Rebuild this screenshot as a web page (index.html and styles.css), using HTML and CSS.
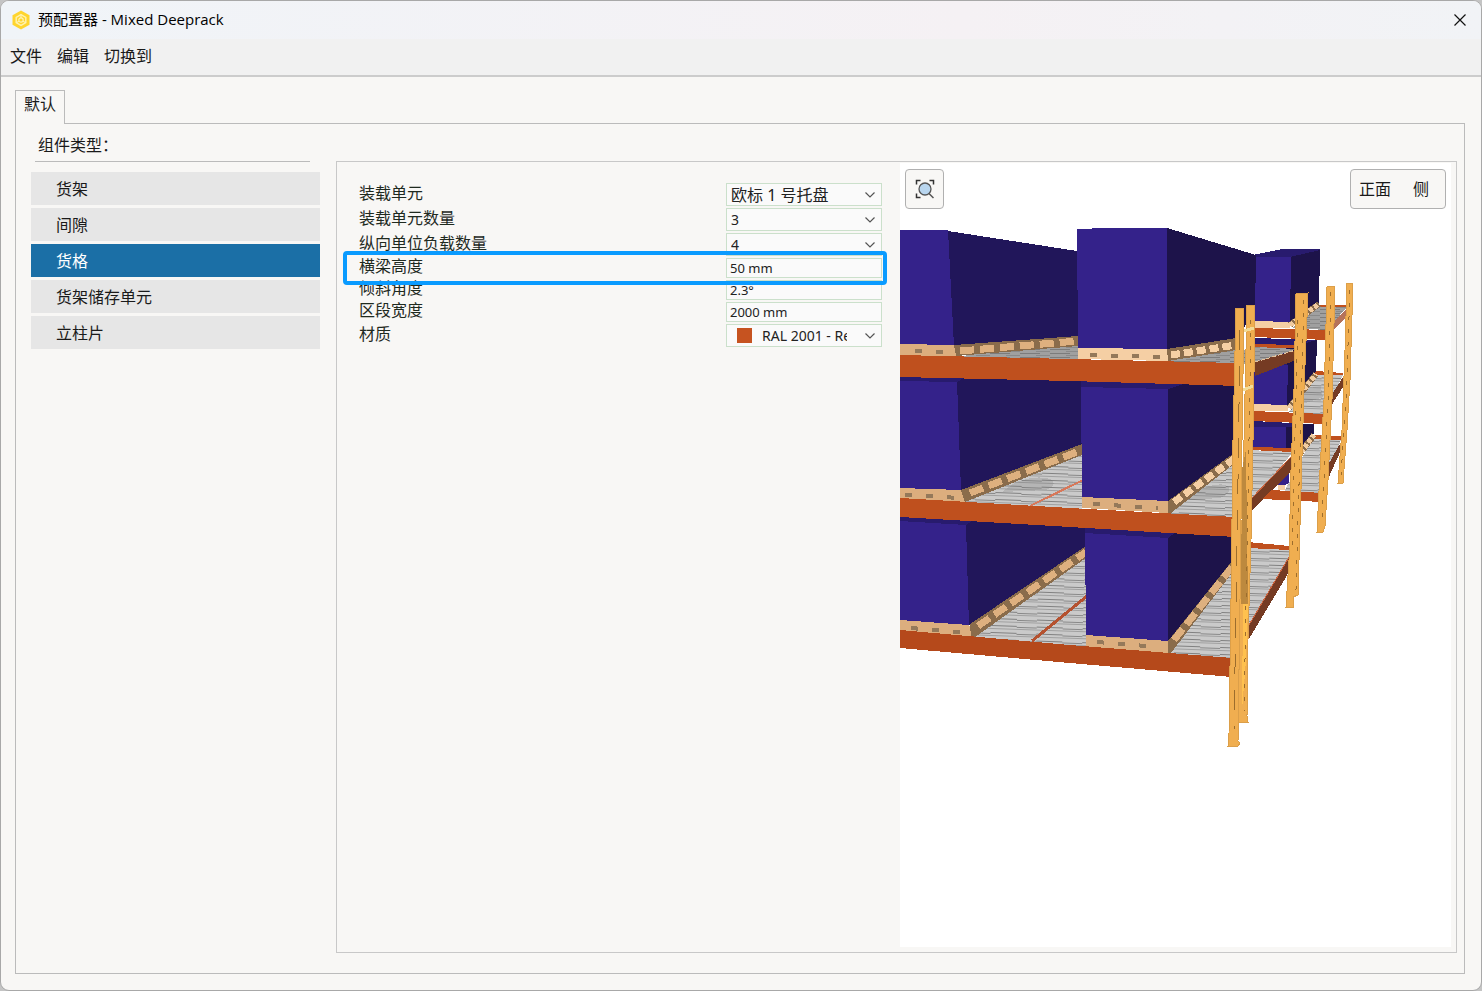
FILE: index.html
```
<!DOCTYPE html>
<html lang="zh-CN">
<head>
    <meta charset="UTF-8">
    <meta name="viewport" content="width=device-width, initial-scale=1.0">
    <title>预配置器 - Mixed Deeprack</title>
    <link rel="stylesheet" href="styles.css">
</head>
<body>
    <div class="window">
        <header class="titlebar">
            <svg class="logo" viewBox="0 0 20 20" aria-hidden="true">
                <path d="M10 0.5L18.5 5.2V14.8L10 19.5L1.5 14.8V5.2Z" fill="#ffd52e"/>
                <path d="M10 4.6L14.8 7.3V12.7L10 15.4L5.2 12.7V7.3Z" fill="none" stroke="#fff3b0" stroke-width="1.4"/>
                <path d="M10 4.6V8M5.2 12.7L8 11.2M14.8 12.7L12 11.2" stroke="#fff3b0" stroke-width="1.2"/>
                <circle cx="10" cy="10" r="2.2" fill="none" stroke="#fff3b0" stroke-width="1.2"/>
            </svg>
            <h1>预配置器 - Mixed Deeprack</h1>
            <button class="close" type="button" aria-label="关闭">
                <svg viewBox="0 0 12 12"><path d="M0.5 0.5L11.5 11.5M11.5 0.5L0.5 11.5" stroke="#111" stroke-width="1.2"/></svg>
            </button>
        </header>

        <nav class="menubar">
            <button type="button">文件</button>
            <button type="button">编辑</button>
            <button type="button">切换到</button>
        </nav>

        <main>
            <div class="tabs">
                <button class="tab" type="button">默认</button>
            </div>

            <div class="tab-panel">
                <aside class="sidebar">
                    <h2>组件类型：</h2>
                    <div class="type-list">
                        <button type="button">货架</button>
                        <button type="button">间隙</button>
                        <button type="button" class="active">货格</button>
                        <button type="button">货架储存单元</button>
                        <button type="button">立柱片</button>
                    </div>
                </aside>

                <section class="detail">
                    <form class="properties">
                        <div class="row">
                            <label for="unit">装载单元</label>
                            <div class="select-box">
                                <select id="unit" class="large"><option>欧标 1 号托盘</option></select>
                                <svg class="chevron" viewBox="0 0 10 6"><path d="M0.5 0.5L5 5L9.5 0.5" fill="none" stroke="#555" stroke-width="1.2"/></svg>
                            </div>
                        </div>
                        <div class="row">
                            <label for="unit-count">装载单元数量</label>
                            <div class="select-box">
                                <select id="unit-count"><option>3</option></select>
                                <svg class="chevron" viewBox="0 0 10 6"><path d="M0.5 0.5L5 5L9.5 0.5" fill="none" stroke="#555" stroke-width="1.2"/></svg>
                            </div>
                        </div>
                        <div class="row">
                            <label for="depth-count">纵向单位负载数量</label>
                            <div class="select-box">
                                <select id="depth-count"><option>4</option></select>
                                <svg class="chevron" viewBox="0 0 10 6"><path d="M0.5 0.5L5 5L9.5 0.5" fill="none" stroke="#555" stroke-width="1.2"/></svg>
                            </div>
                        </div>
                        <div class="row highlight">
                            <label for="beam-height">横梁高度</label>
                            <input id="beam-height" type="text" value="50 mm">
                        </div>
                        <div class="row">
                            <label for="angle">倾斜角度</label>
                            <input id="angle" type="text" value="2.3°">
                        </div>
                        <div class="row">
                            <label for="bay-width">区段宽度</label>
                            <input id="bay-width" type="text" value="2000 mm">
                        </div>
                        <div class="row">
                            <label for="material">材质</label>
                            <div class="select-box">
                                <select id="material" class="with-swatch"><option>RAL 2001 - Red orange</option></select>
                                <span class="swatch"></span>
                                <svg class="chevron" viewBox="0 0 10 6"><path d="M0.5 0.5L5 5L9.5 0.5" fill="none" stroke="#555" stroke-width="1.2"/></svg>
                            </div>
                        </div>
                    </form>

                    <div class="view">
                        <svg class="scene" viewBox="900 163 551 784" preserveAspectRatio="xMinYMin meet" shape-rendering="crispEdges" role="img" aria-label="货架三维视图">
                            <defs>
                                <pattern id="rollers" width="46" height="7" patternUnits="userSpaceOnUse" patternTransform="rotate(2)">
                                    <rect width="46" height="7" fill="#cacaca"/>
                                    <rect y="2" width="26" height="1" fill="#808080"/>
                                    <rect x="26" y="3" width="20" height="1" fill="#888888"/>
                                    <rect y="5" width="46" height="1" fill="#a0a0a0"/>
                                </pattern>
                                <pattern id="rollers-far" width="30" height="4" patternUnits="userSpaceOnUse">
                                    <rect width="30" height="4" fill="#a0a0a0"/>
                                    <rect y="1" width="20" height="1" fill="#7c7c7c"/>
                                    <rect x="16" y="3" width="14" height="1" fill="#8a8a8a"/>
                                </pattern>
                            </defs>

                            <!-- rear bays -->
                            <g class="rear">
                                <path class="top" d="M1253 255L1282 249H1320V258H1253Z"/>
                                <path class="side-dark" d="M1290 257L1320 250L1319 303L1290 323Z"/>
                                <path class="front" d="M1255 257H1291L1290 322H1255Z"/>
                                <path class="beam" d="M1319 305H1347V308H1317Z"/>
                                <path class="floor-far" d="M1292 328L1319 307H1347L1327 330Z"/>
                                <path class="pallet-light" d="M1255 321L1290 322V328H1255Z"/>
                                <path class="pallet-edge" d="M1290 325L1319 304"/>
                                <path class="pallet-blocks" d="M1290 325L1319 304"/>
                                <path class="beam-pale" d="M1334 321L1347 309V317L1334 329Z"/>

                                <path class="top" d="M1255 338L1317 340V344L1288 366H1255Z"/>
                                <path class="side-dark" d="M1287 348L1317 340L1316 372L1287 406Z"/>
                                <path class="front" d="M1254 365H1288L1287 405H1254Z"/>
                                <path class="beam" d="M1255 328L1327 330V340L1255 337Z"/>
                                <path class="beam" d="M1255 344L1296 345V348H1255Z"/>
                                <path class="floor-far" d="M1238 352L1257 347L1296 349L1256 363L1238 364Z"/>
                                <path class="beam-side" d="M1255 362L1296 350V360L1255 376Z"/>
                                <path d="M1255 362L1296 350" stroke="#e5c39c" stroke-dasharray="4 2"/>

                                <path class="beam" d="M1316 371L1343 373V376L1314 375Z"/>
                                <path class="floor" d="M1289 412L1316 375H1343L1331 398L1325 415Z"/>
                                <path class="shade" d="M1303 394Q1308 386 1321 387L1323 397L1303 404Z"/>
                                <path class="pallet-light" d="M1254 404L1288 405V411H1254Z"/>
                                <path class="pallet-edge" d="M1289 408L1316 374"/>
                                <path class="pallet-blocks" d="M1289 408L1316 374"/>
                                <path class="beam-side" d="M1331 396L1343 377V387L1331 406Z"/>

                                <path class="side-dark" d="M1285 423L1314 424V433L1300 452L1285 449Z"/>
                                <path class="front" d="M1253 426H1286V448H1253Z"/>
                                <path class="top" d="M1253 421L1292 423V427H1253Z"/>
                                <path class="beam" d="M1253 411L1325 414V424L1253 421Z"/>
                                <path class="beam" d="M1313 435L1341 436V440H1312Z"/>
                                <path class="floor" d="M1284 492L1312 439L1341 440L1330 470L1322 494Z"/>
                                <path class="pallet-edge" d="M1301 452L1314 435"/>
                                <path class="pallet-blocks" d="M1301 452L1314 435"/>
                                <path class="beam-side" d="M1328 465L1341 442V450L1328 479Z"/>
                                <path class="front" d="M1278 485L1289 472V483L1284 486Z"/>
                                <path class="pallet-light" d="M1278 485H1285V490H1278Z"/>

                                <path class="beam" d="M1253 447L1293 448V452L1250 450Z"/>
                                <path class="floor" d="M1248 450L1293 452L1252 501Z"/>
                                <path class="beam-side" d="M1251 499L1291 457V471L1251 511Z"/>
                                <path class="beam-line" d="M1251 499L1291 457"/>
                                <path class="beam" d="M1271 490L1322 493V502L1262 499Z"/>

                                <path class="beam" d="M1248 542L1289 546V550L1248 548Z"/>
                                <path class="floor" d="M1248 548L1289 550V562L1249 630Z"/>
                                <path class="beam-side" d="M1249 625L1289 557V572L1249 639Z"/>
                                <path class="beam-line" d="M1249 625L1289 557"/>
                            </g>

                            <!-- top level -->
                            <path class="side" d="M948 231L1077 251L1079 338L953 346Z"/>
                            <path class="front" d="M900 230H948L954 346L900 345Z"/>
                            <path class="floor-far" d="M955 357L1078 340V362H955Z"/>
                            <path class="pallet" d="M900 344L954 345L958 357L900 356Z"/>
                            <path class="pallet-gaps" d="M915 351L975 353"/>
                            <path class="band" d="M954 345L1078 336V346L956 356Z"/>
                            <path class="pallet-blocks wide" d="M960 351L1078 341"/>
                            <path class="floor-far" d="M1167 361L1237 346V366H1167Z"/>
                            <path class="side-dark" d="M1167 228L1256 255L1255 312L1236 339L1167 350Z"/>
                            <path class="front" d="M1077 229L1107 228H1167V350L1078 348Z"/>
                            <path class="pallet-light" d="M1078 348L1167 349L1168 361L1078 359Z"/>
                            <path class="pallet-gaps" d="M1090 355L1160 357"/>
                            <path class="band" d="M1167 349L1236 338V350L1168 361Z"/>
                            <path class="pallet-blocks light wide" d="M1171 355L1236 345"/>

                            <!-- middle level -->
                            <path class="side" d="M956 375L1084 378L1082 446L960 492Z"/>
                            <path class="front" d="M900 377L957 381L961 491L900 488Z"/>
                            <path class="top" d="M900 376L964 378L957 382L900 381Z"/>
                            <path class="floor" d="M962 500L1082 452V512L962 505Z"/>
                            <path class="shade" d="M1016 482Q1040 474 1052 480Q1057 486 1046 490L1002 492Z"/>
                            <path class="rail" d="M1030 506L1083 480"/>
                            <path class="pallet" d="M900 488L961 490L966 502L900 499Z"/>
                            <path class="pallet-gaps" d="M905 495L960 498"/>
                            <path class="band" d="M961 490L1082 444V455L965 502Z"/>
                            <path class="pallet-blocks wide" d="M970 493L1082 450"/>
                            <path class="floor" d="M1167 513L1235 460V520L1167 516Z"/>
                            <path class="shade" d="M1200 489Q1222 481 1229 487Q1231 494 1220 498L1186 500Z"/>
                            <path class="side-dark" d="M1167 380H1238L1234 455L1167 502Z"/>
                            <path class="front" d="M1081 386L1168 388V502L1082 498Z"/>
                            <path class="top" d="M1081 387V378L1184 380V384L1168 389Z"/>
                            <path class="pallet" d="M1082 497L1168 501V513L1082 508Z"/>
                            <path class="pallet-gaps" d="M1093 504L1158 508"/>
                            <path class="band" d="M1168 501L1234 453V464L1171 513H1168Z"/>
                            <path class="pallet-blocks light wide" d="M1174 502L1234 459"/>
                            <path class="beam" d="M900 355L1070 359L1237 363L1240 386L1070 381L900 377Z"/>

                            <!-- bottom level -->
                            <path class="side" d="M965 517L1088 524L1086 548L968 626Z"/>
                            <path class="front" d="M900 518L966 524L969 626L900 621Z"/>
                            <path class="top" d="M900 514L972 518V521L966 525L900 521Z"/>
                            <path class="floor" d="M970 635L1086 554L1087 650L970 640Z"/>
                            <path class="rail dark" d="M1032 641L1087 596"/>
                            <path class="pallet" d="M900 620L969 625L974 637L900 631Z"/>
                            <path class="pallet-gaps" d="M911 628L966 633"/>
                            <path class="band" d="M970 624L1086 546V558L975 637H971Z"/>
                            <path class="pallet-blocks wide" d="M978 626L1086 552"/>
                            <path class="floor" d="M1167 656L1233 568V662L1167 657Z"/>
                            <path class="side-dark" d="M1167 528L1233 532L1232 563L1167 642Z"/>
                            <path class="front" d="M1085 532L1168 536V642L1086 636Z"/>
                            <path class="top" d="M1085 533V524L1176 529V532L1168 538Z"/>
                            <path class="pallet" d="M1086 635L1168 641V653L1086 647Z"/>
                            <path class="pallet-gaps" d="M1097 642L1158 647"/>
                            <path class="band" d="M1168 641L1232 561V573L1171 653H1168Z"/>
                            <path class="pallet-blocks wide" d="M1174 640L1232 567"/>
                            <path class="beam" d="M900 498L1070 508L1235 517V537L1070 527L900 517Z"/>
                            <path class="beam low" d="M900 630L1070 645L1232 658V677L1070 663L900 648Z"/>

                            <!-- uprights -->
                            <path class="post" d="M1347 283H1353L1350 380L1347 430L1343 483H1338L1342 430L1345 350Z"/>
                            <path class="slots" d="M1350 290L1346 400L1341 475"/>
                            <path class="post" d="M1327 287L1335 286L1332 400L1328 480L1325 526L1323 532H1317L1320 470L1324 400Z"/>
                            <path class="slots" d="M1331 292L1328 400L1322 520"/>
                            <path class="post" d="M1296 294L1308 293L1304 390L1301 490L1298 595L1293 597V607H1286L1289 560L1291 470L1294 390Z"/>
                            <path class="slots" d="M1304 300L1300 450L1296 590"/>
                            <path class="slots" d="M1298 320L1294 470L1292 550"/>
                            <path class="post" d="M1247 305H1255L1253 440L1251 540L1248 640L1247 716L1248 722H1238L1240 600L1244 440Z"/>
                            <path d="M1242 470L1246 450L1248 604H1241Z" fill="#bd893e"/>
                            <path d="M1243 604H1248L1246 660L1242 710Z" fill="#ffc14f"/>
                            <path class="slots" d="M1251 320L1248 500L1244 712"/>
                            <path class="brace" d="M1244 331L1254 328M1243 390L1253 386"/>
                            <path class="post" d="M1236 308H1244L1242 440L1240 600L1238 741L1240 743L1238 746H1228L1229 733L1231 600L1233 440Z"/>
                            <path class="slots long" d="M1240 330L1238 480L1234 730"/>
                        </svg>

                        <button class="tool fit" type="button" aria-label="缩放至全部">
                            <svg viewBox="0 0 20 20">
                                <path d="M1.5 5.5V1.5H5.5M14.5 1.5H18.5V5.5M1.5 14.5V18.5H5.5" fill="none" stroke="#333" stroke-width="1.5"/>
                                <path d="M13.5 14L18.5 19" stroke="#555" stroke-width="1.5"/>
                                <circle cx="10" cy="10" r="6" fill="#b9d6ef" stroke="#555" stroke-width="1.3"/>
                            </svg>
                        </button>
                        <div class="tool sides">
                            <button type="button">正面</button>
                            <button type="button">侧</button>
                        </div>
                    </div>
                </section>
            </div>
        </main>
    </div>
</body>
</html>
```

FILE: styles.css
```
* {
    box-sizing: border-box;
}

body {
    margin: 0;
    background-color: #c4c4c4;
    font-family: "Noto Sans", "Noto Sans CJK SC", sans-serif;
    font-size: 16px;
    color: #1a1a1a;
}

button,
input,
select {
    font-family: inherit;
    font-size: inherit;
    color: inherit;
    margin: 0;
}

button {
    border: none;
    background: none;
    padding: 0;
    cursor: pointer;
}

.window {
    min-height: 100vh;
    display: flex;
    flex-direction: column;
    background-color: #f8f7f5;
    border: 1px solid #a8a8a8;
    border-radius: 9px;
    overflow: hidden;
}

/* title and menu */
.titlebar {
    display: flex;
    align-items: center;
    height: 38px;
    padding: 0 15px 0 10px;
    background: linear-gradient(90deg, #f0f4f8, #f5f1f4 65%, #f1f3f6);
}

.logo {
    width: 20px;
    height: 20px;
    margin-right: 7px;
}

.titlebar h1 {
    flex: 1;
    margin: 0;
    padding-bottom: 4px;
    font-size: 15px;
    font-weight: normal;
    font-family: "Open Sans", "Noto Sans CJK SC", sans-serif;
    color: #000000;
}

.close {
    display: flex;
}

.close svg {
    width: 12px;
    height: 12px;
}

.menubar {
    display: flex;
    gap: 15px;
    height: 38px;
    padding: 0 9px 4px;
    background-color: #f1f1f1;
    border-bottom: 2px solid #cccccc;
}

/* tabs */
main {
    flex: 1;
    display: flex;
    flex-direction: column;
    padding: 13px 16px 16px 14px;
}

.tabs {
    display: flex;
}

.tab {
    height: 34px;
    padding: 0 8px 10px;
    margin-bottom: -1px;
    background-color: #f8f7f5;
    border: 1px solid #bbbbbb;
    border-bottom: none;
    z-index: 1;
}

.tab-panel {
    flex: 1;
    display: flex;
    gap: 16px;
    padding: 0 7px 20px 15px;
    border: 1px solid #bbbbbb;
}

/* component list */
.sidebar {
    width: 289px;
}

.sidebar h2 {
    margin: 0 10px 10px 4px;
    padding: 6px 3px 0;
    height: 38px;
    line-height: 30px;
    font-size: 16px;
    font-weight: normal;
    border-bottom: 1px solid #bbbbbb;
}

.type-list {
    display: flex;
    flex-direction: column;
    gap: 3px;
}

.type-list button {
    height: 33px;
    padding: 0 25px 2px;
    text-align: left;
    background-color: #e6e6e6;
}

.type-list .active {
    background-color: #1b6fa6;
    color: #ffffff;
}

/* properties */
.detail {
    flex: 1;
    display: grid;
    grid-template-columns: 563fr 551fr;
    margin-top: 37px;
    padding: 1px 5px 5px 0;
    border: 1px solid #c8c8c8;
}

.properties {
    padding: 20px 18px 0 22px;
    color: #1f2a1f;
}

.row {
    position: relative;
    display: flex;
    align-items: center;
    justify-content: space-between;
    margin-bottom: 2px;
}

.row label {
    line-height: 16px;
    padding-bottom: 4px;
}

.row input,
.select-box {
    width: 156px;
}

.row input {
    height: 20px;
    padding: 0 3px 1px;
    font-size: 13px;
    background-color: #fafafa;
    border: 1px solid #cbe0cb;
    color: #222222;
}

.select-box {
    position: relative;
}

.select-box select {
    display: block;
    width: 100%;
    height: 23px;
    padding: 0 34px 1px 4px;
    font-size: 14px;
    background-color: #fafafa;
    border: 1px solid #cbe0cb;
    border-radius: 0;
    appearance: none;
    color: #222222;
}

.select-box .large {
    font-size: 16px;
}

.select-box .with-swatch {
    padding-left: 35px;
}

.swatch {
    position: absolute;
    left: 11px;
    top: 4px;
    width: 15px;
    height: 15px;
    background-color: #c65320;
    pointer-events: none;
}

.chevron {
    position: absolute;
    right: 7px;
    top: 9px;
    width: 10px;
    height: 6px;
    pointer-events: none;
}

.highlight::after {
    content: "";
    position: absolute;
    inset: -7px -5px -7px -16px;
    border: 4px solid #0a9bff;
    border-radius: 4px;
    pointer-events: none;
    z-index: 1;
}

/* 3D view */
.view {
    position: relative;
    background-color: #ffffff;
}

.scene {
    display: block;
    width: 100%;
}

.front { fill: #34228a; }
.side { fill: #21165a; }
.side-dark { fill: #1d134a; }
.top { fill: #281b6e; }
.beam { fill: #bf501e; }
.beam.low { fill: #b5491b; }
.beam-side { fill: #753b23; }
.beam-pale { fill: #b5735a; }
.floor { fill: url(#rollers); }
.floor-far { fill: url(#rollers-far); }
.shade { fill: #777777; opacity: 0.25; }
.pallet { fill: #dcae7e; }
.pallet-light { fill: #f5cfa4; }
.band { fill: #8a6c4b; }
.post { fill: #f0ae50; stroke: #dc9f49; stroke-width: 1; }

.pallet-edge,
.pallet-blocks,
.pallet-gaps,
.beam-line,
.rail,
.slots,
.brace {
    fill: none;
}

.pallet-edge { stroke: #8a6c4b; stroke-width: 6; }
.pallet-blocks { stroke: #f0cba0; stroke-width: 5; stroke-dasharray: 4 2; }
.pallet-blocks.wide { stroke: #deb07f; stroke-width: 7; stroke-dasharray: 14 6; }
.pallet-blocks.light.wide { stroke: #f5cfa4; stroke-dasharray: 9 4; }
.pallet-gaps { stroke: #94795a; stroke-width: 4; stroke-dasharray: 7 14; }
.beam-line { stroke: #c96540; stroke-width: 1; }
.rail { stroke: #d8785a; stroke-width: 2; }
.rail.dark { stroke: #b55230; stroke-width: 3; }
.slots { stroke: #9c6d2d; stroke-width: 1; stroke-dasharray: 4 9; }
.slots.long { stroke-dasharray: 20 16; }
.brace { stroke: #f2dc98; stroke-width: 3; }

.tool {
    position: absolute;
    top: 6px;
    height: 40px;
    background-color: #f8f7f5;
    border: 1px solid #b0b0b0;
    border-radius: 4px;
}

.fit {
    left: 5px;
    width: 39px;
    display: flex;
    align-items: center;
    justify-content: center;
}

.fit svg {
    width: 20px;
    height: 20px;
}

.sides {
    right: 5px;
    display: flex;
    gap: 22px;
    padding: 0 16px 2px 8px;
}
```
